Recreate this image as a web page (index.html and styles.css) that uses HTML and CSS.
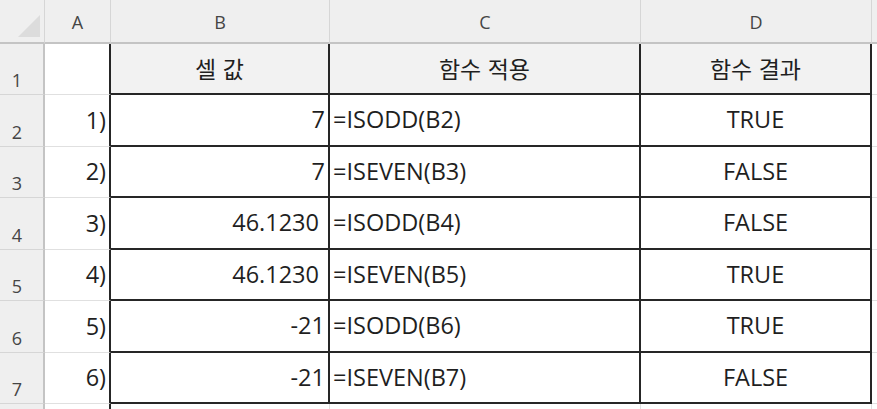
FILE: index.html
```html
<!DOCTYPE html>
<html lang="ko">
<head>
<meta charset="utf-8">
<link rel="stylesheet" href="styles.css">
</head>
<body>
<div class="sheet">
  <div class="corner"><span class="tri"></span></div>
  <div class="colhead">A</div>
  <div class="colhead">B</div>
  <div class="colhead">C</div>
  <div class="colhead">D</div>
  <div class="colhead last"></div>

  <div class="rowhead">1</div>
  <div class="cell a"></div>
  <div class="cell t head">셀 값</div>
  <div class="cell t head">함수 적용</div>
  <div class="cell t head">함수 결과</div>
  <div class="cell e"></div>

  <div class="rowhead">2</div>
  <div class="cell a right">1)</div>
  <div class="cell t right">7</div>
  <div class="cell t left">=ISODD(B2)</div>
  <div class="cell t center">TRUE</div>
  <div class="cell e"></div>

  <div class="rowhead">3</div>
  <div class="cell a right">2)</div>
  <div class="cell t right">7</div>
  <div class="cell t left">=ISEVEN(B3)</div>
  <div class="cell t center">FALSE</div>
  <div class="cell e"></div>

  <div class="rowhead">4</div>
  <div class="cell a right">3)</div>
  <div class="cell t right pad">46.1230</div>
  <div class="cell t left">=ISODD(B4)</div>
  <div class="cell t center">FALSE</div>
  <div class="cell e"></div>

  <div class="rowhead">5</div>
  <div class="cell a right">4)</div>
  <div class="cell t right pad">46.1230</div>
  <div class="cell t left">=ISEVEN(B5)</div>
  <div class="cell t center">TRUE</div>
  <div class="cell e"></div>

  <div class="rowhead">6</div>
  <div class="cell a right">5)</div>
  <div class="cell t right">-21</div>
  <div class="cell t left">=ISODD(B6)</div>
  <div class="cell t center">TRUE</div>
  <div class="cell e"></div>

  <div class="rowhead">7</div>
  <div class="cell a right">6)</div>
  <div class="cell t right">-21</div>
  <div class="cell t left">=ISEVEN(B7)</div>
  <div class="cell t center">FALSE</div>
  <div class="cell e"></div>

  <div class="rowhead"></div>
  <div class="cell a"></div>
  <div class="cell"></div>
  <div class="cell"></div>
  <div class="cell"></div>
  <div class="cell e"></div>
</div>
</body>
</html>
```

FILE: styles.css
```css
* { box-sizing: border-box; }
html, body { margin: 0; padding: 0; background: #ffffff; }
body {
  width: 877px;
  height: 409px;
  overflow: hidden;
  font-family: "Open Sans", "Noto Sans CJK KR", sans-serif;
  font-size: 23.5px;
  color: #1f1f1f;
}
.sheet {
  display: grid;
  grid-template-columns: 45px 66px 219px 311px 231px 5px;
  grid-template-rows: 44px 51px 52px 51px 52px 51px 52px 51px 20px;
}
.corner {
  background: #efefef;
  border-right: 1px solid #d6d6d6;
  border-bottom: 2px solid #c4c4c4;
  position: relative;
}
.tri {
  position: absolute;
  left: 18px;
  top: 15px;
  width: 22px;
  height: 22px;
  background: #dcdcdc;
  clip-path: polygon(100% 0, 100% 100%, 0 100%);
}
.colhead {
  background: #efefef;
  border-right: 1px solid #d6d6d6;
  border-bottom: 2px solid #c4c4c4;
  color: #454545;
  font-size: 18px;
  display: flex;
  align-items: center;
  justify-content: center;
  padding-top: 1px;
}
.colhead.last { border-right: none; }
.rowhead {
  background: #efefef;
  border-right: 2px solid #c4c4c4;
  border-bottom: 1px solid #d6d6d6;
  color: #454545;
  font-size: 18px;
  display: flex;
  align-items: flex-end;
  justify-content: center;
  padding-right: 9px;
  padding-bottom: 2px;
}
.cell {
  border-right: 1px solid #e0e0e0;
  border-bottom: 1px solid #e0e0e0;
  display: flex;
  align-items: center;
  white-space: nowrap;
  padding-bottom: 2px;
}
.cell.a { border-right: 2px solid #262626; }
.cell.t {
  border-right: 2px solid #262626;
  border-bottom: 2px solid #262626;
}
.cell.head {
  background: #f2f2f2;
  justify-content: center;
  font-family: "Noto Sans CJK KR", sans-serif;
  font-size: 23px;
}
.cell.e { border-right: none; }
.right { justify-content: flex-end; padding-right: 3px; }
.right.pad { padding-right: 9px; }
.left { justify-content: flex-start; padding-left: 3px; }
.center { justify-content: center; }
```
